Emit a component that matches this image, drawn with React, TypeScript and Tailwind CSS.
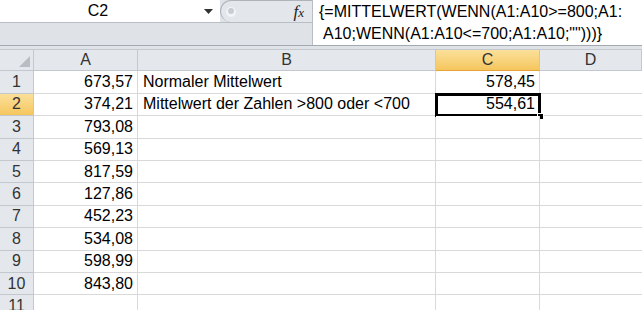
import React from "react";

const colA = ["673,57", "374,21", "793,08", "569,13", "817,59", "127,86", "452,23", "534,08", "598,99", "843,80", ""];
const colB: Record<number, string> = { 1: "Normaler Mittelwert", 2: "Mittelwert der Zahlen >800 oder <700" };
const colC: Record<number, string> = { 1: "578,45", 2: "554,61" };

const headBg = "bg-[#e4e8ed]";
const selBg = "bg-gradient-to-b from-[#fbe09a] to-[#f5c65c]";

function FormulaBar() {
  return (
    <div className="bg-[#dfe3e8]">
      <div className="flex h-[46px] border-b border-[#a3a9b0]">
        <div className="w-[312px] flex flex-col">
          <div className="flex h-[23px] border-b border-[#b9bec4]">
            {/* name box */}
            <div className="w-[220px] bg-white flex items-center">
              <span className="flex-1 text-center text-[16px] text-black">C2</span>
              <span className="w-[24px] flex justify-center">
                <svg width="9" height="5" viewBox="0 0 9 5">
                  <path d="M0 0h9L4.5 5z" fill="#333" />
                </svg>
              </span>
            </div>
            {/* collapsed splitter pill + fx */}
            <div className="relative flex-1 flex items-center justify-end pr-[8px] rounded-l-[12px] border-l border-t border-[#aeb4ba] bg-[#e3e6ea]">
              <svg className="absolute left-[3px] top-[4px]" width="14" height="14" viewBox="0 0 14 14">
                <circle cx="7" cy="7" r="5" fill="#f2f4f6" />
                <circle cx="7" cy="6" r="3" fill="#c9cdd2" />
              </svg>
              <span className="font-['Liberation_Serif',serif] italic text-[17px] leading-none text-[#222]">
                f<span className="text-[13px]">x</span>
              </span>
            </div>
          </div>
        </div>
        <div className="flex-1 bg-white border-l border-[#b9bec4] text-[16px] leading-[22px] text-black pt-[1px]">
          <div className="pl-[6px]">{"{=MITTELWERT(WENN(A1:A10>=800;A1:"}</div>
          <div className="pl-[10px]">{'A10;WENN(A1:A10<=700;A1:A10;"")))}'}</div>
        </div>
      </div>
      <div className="h-[3px]" />
    </div>
  );
}

function Sheet() {
  const cols = ["A", "B", "C", "D"];
  return (
    <div className="grid grid-cols-[34px_104px_298px_104px_1fr] auto-rows-[22.4px] text-[16px]">
      {/* column headers */}
      <div className={`${headBg} border-t border-r border-b border-[#c3c8ce] relative h-[22px]`}>
        <svg className="absolute right-[3px] bottom-[3px]" width="11" height="11" viewBox="0 0 11 11">
          <path d="M11 0v11H0z" fill="#b8bdc3" />
        </svg>
      </div>
      {cols.map((c) => (
        <div
          key={c}
          className={`${c === "C" ? selBg + " border-b-[#e5a33a]" : headBg + " border-b-[#c3c8ce]"} h-[22px] border-t border-t-[#c3c8ce] border-r border-r-[#c3c8ce] border-b flex items-center justify-center text-[#333]`}
        >
          {c}
        </div>
      ))}
      {colA.map((a, i) => {
        const r = i + 1;
        return (
          <React.Fragment key={r}>
            <div
              className={`${r === 2 ? selBg : headBg} border-r border-b border-[#c3c8ce] flex items-center justify-center text-[#333]`}
            >
              {r}
            </div>
            <div className="bg-white border-r border-b border-[#d9d9d9] flex items-center justify-end pr-[4px] text-black">{a}</div>
            <div className="bg-white border-r border-b border-[#d9d9d9] flex items-center pl-[5px] text-black whitespace-nowrap">
              {colB[r] ?? ""}
            </div>
            <div className="relative bg-white border-r border-b border-[#d9d9d9] flex items-center justify-end pr-[4px] text-black">
              {colC[r] ?? ""}
              {r === 2 && (
                <>
                  <div className="absolute -left-[1px] -top-[1px] right-[-2px] bottom-[-2px] border-[3px] border-black" />
                  <div className="absolute right-[-5px] bottom-[-5px] w-[7px] h-[7px] bg-black border border-white" />
                </>
              )}
            </div>
            <div className="bg-white border-b border-[#d9d9d9]" />
          </React.Fragment>
        );
      })}
    </div>
  );
}

export default function App() {
  return (
    <div className="w-[642px] h-[310px] overflow-hidden bg-white font-['Liberation_Sans',Arial,sans-serif]">
      <FormulaBar />
      <Sheet />
    </div>
  );
}
